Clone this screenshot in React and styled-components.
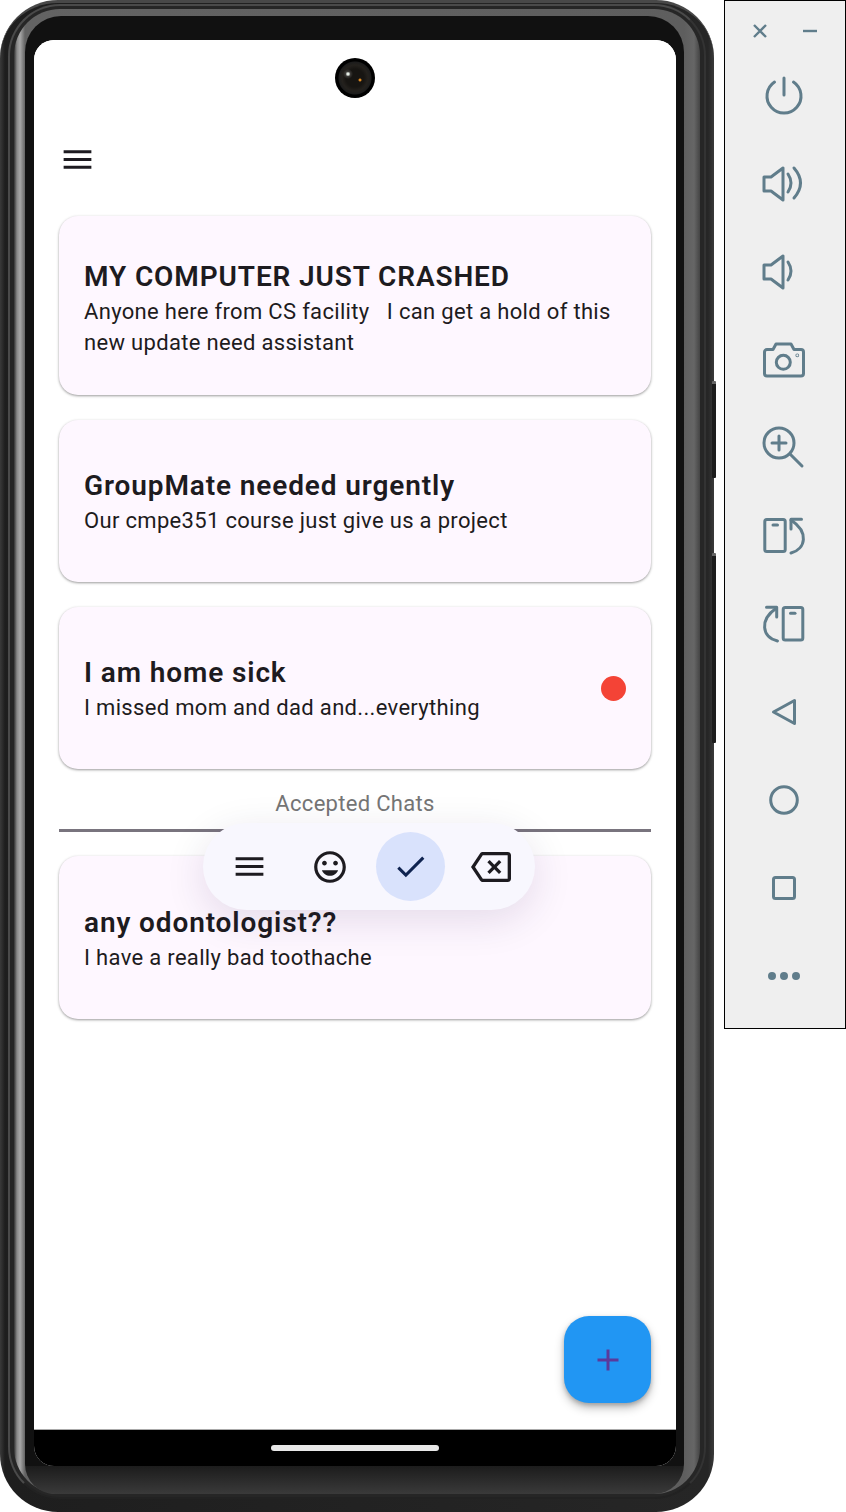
import React from 'react';
import styled, { createGlobalStyle } from 'styled-components';

const GlobalStyle = createGlobalStyle`
  html, body {
    margin: 0;
    padding: 0;
    background: #fff;
  }
  * {
    box-sizing: border-box;
  }
`;

const material = {
  menu: 'M3 18h18v-2H3v2zm0-5h18v-2H3v2zm0-7v2h18V6H3z',
  smile: 'M11.99 2C6.47 2 2 6.48 2 12s4.47 10 9.99 10C17.52 22 22 17.52 22 12S17.52 2 11.99 2zM12 20c-4.42 0-8-3.58-8-8s3.58-8 8-8 8 3.58 8 8-3.58 8-8 8zm3.5-9c.83 0 1.5-.67 1.5-1.5S16.33 8 15.5 8 14 8.67 14 9.5s.67 1.5 1.5 1.5zm-7 0c.83 0 1.5-.67 1.5-1.5S9.33 8 8.5 8 7 8.67 7 9.5 7.67 11 8.5 11zm3.5 6.5c2.33 0 4.31-1.46 5.11-3.5H6.89c.8 2.04 2.78 3.5 5.11 3.5z',
  check: 'M9 16.17L4.83 12l-1.42 1.41L9 19 21 7l-1.41-1.41z',
  backspace: 'M22 3H7c-.69 0-1.23.35-1.59.88L0 12l5.41 8.11c.36.53.9.89 1.59.89h15c1.1 0 2-.9 2-2V5c0-1.1-.9-2-2-2zm0 16H7.07L2.4 12l4.66-7H22v14zM11.2 16.2L14 13.4l2.8 2.8 1.4-1.4L15.4 12l2.8-2.8-1.4-1.4L14 10.6l-2.8-2.8-1.4 1.4L12.6 12l-2.8 2.8z',
  add: 'M19 13h-6v6h-2v-6H5v-2h6V5h2v6h6v2z',
};

const MaterialIcon = ({ name, size = 37, color = '#1d1b20' }) => (
  <svg width={size} height={size} viewBox="0 0 24 24" fill={color}>
    <path d={material[name]} />
  </svg>
);

const chats = [
  {
    title: 'MY COMPUTER JUST CRASHED',
    body: 'Anyone here from CS facility   I can get a hold of this new update need assistant',
    height: 179,
    offset: 4,
  },
  { title: 'GroupMate needed urgently', body: 'Our cmpe351 course just give us a project', height: 162 },
  { title: 'I am home sick', body: 'I missed mom and dad and...everything', height: 162, unread: true },
];

const accepted = [{ title: 'any odontologist??', body: 'I have a really bad toothache', height: 163 }];

const ChatCard = ({ chat }) => (
  <Card $height={chat.height} $offset={chat.offset || 0}>
    <CardText>
      <CardTitle>{chat.title}</CardTitle>
      <CardBody>{chat.body}</CardBody>
    </CardText>
    {chat.unread && <UnreadDot />}
  </Card>
);

const sideIcons = [
  <>
    <path d="M22 4V21" />
    <path d="M12.5 8A17 17 0 1 0 31.5 8" />
  </>,
  <>
    <path d="M2 15H9L21 6V38L9 29H2Z" />
    <path d="M26 12Q32 21 26 30" />
    <path d="M32 6Q45 21 32 36" />
  </>,
  <>
    <path d="M2 15H9L21 6V38L9 29H2Z" />
    <path d="M26 12Q32 21 26 30" />
  </>,
  <>
    <path d="M5 11.5H11L14 6H29L32 11.5H39A2.5 2.5 0 0 1 41.5 14V35.5A2.5 2.5 0 0 1 39 38H5A2.5 2.5 0 0 1 2.5 35.5V14A2.5 2.5 0 0 1 5 11.5Z" />
    <circle cx="21.3" cy="24.3" r="7" />
    <circle cx="35.3" cy="17.3" r="0.4" />
  </>,
  <>
    <circle cx="17" cy="17" r="15" />
    <path d="M28 28L40 40" />
    <path d="M10 17H24M17 10V24" />
  </>,
  <>
    <rect x="2.8" y="5.5" width="20.4" height="32" rx="2" />
    <path d="M11 11H15.5" />
    <path d="M29 6C47 18 44 35 29 39" />
    <path d="M29 5.3H39.5M29 5.3V15" />
  </>,
  <>
    <rect x="21.2" y="5.5" width="19.6" height="32.5" rx="2" />
    <path d="M28.5 11.3H33" />
    <path d="M14.5 6C-3 18 0 35 15.5 39" />
    <path d="M14.7 5.3H4.5M14.7 5.3V15" />
  </>,
  <path d="M11.5 22L32.5 10.5V33.5Z" />,
  <circle cx="22" cy="22" r="13.3" />,
  <rect x="11.5" y="11.5" width="21" height="21" rx="2" />,
  <>
    <circle cx="10" cy="22" r="2.5" />
    <circle cx="22" cy="22" r="2.5" />
    <circle cx="34" cy="22" r="2.5" />
  </>,
];

export default function App() {
  return (
    <Stage>
      <GlobalStyle />
      <Phone>
        <VolumeKey $top={378} $height={97} />
        <VolumeKey $top={550} $height={190} />
        <Groove>
          <Gloss>
            <Bezel>
              <Screen>
                <Camera />
                <AppArea>
                  <Header>
                    <MaterialIcon name="menu" />
                  </Header>
                  <CardList>
                    {chats.map((chat, index) => (
                      <ChatCard chat={chat} key={index} />
                    ))}
                  </CardList>
                  <SectionLabel>Accepted Chats</SectionLabel>
                  <Divider />
                  <CardList>
                    {accepted.map((chat, index) => (
                      <ChatCard chat={chat} key={index} />
                    ))}
                  </CardList>
                  <FloatingBar>
                    <BarButton>
                      <MaterialIcon name="menu" />
                    </BarButton>
                    <BarButton>
                      <MaterialIcon name="smile" size={38} />
                    </BarButton>
                    <BarButton $active>
                      <MaterialIcon name="check" color="#0f2350" />
                    </BarButton>
                    <BarButton>
                      <MaterialIcon name="backspace" size={40} />
                    </BarButton>
                  </FloatingBar>
                  <Fab>
                    <MaterialIcon name="add" size={36} color="#5a3a9c" />
                  </Fab>
                </AppArea>
                <NavBar>
                  <HomePill />
                </NavBar>
              </Screen>
            </Bezel>
          </Gloss>
        </Groove>
      </Phone>
      <SideBar>
        <SideHeader>
          <svg width="16" height="16" viewBox="0 0 16 16">
            <SideStroke d="M2 2L14 14M14 2L2 14" />
          </svg>
          <svg width="16" height="16" viewBox="0 0 16 16">
            <SideStroke d="M1 8H15" />
          </svg>
        </SideHeader>
        {sideIcons.map((icon, index) => (
          <SideItem key={index}>
            <SideIcon viewBox="0 0 44 44" $dots={index === sideIcons.length - 1}>
              {icon}
            </SideIcon>
          </SideItem>
        ))}
      </SideBar>
    </Stage>
  );
}

const Stage = styled.div`
  width: 846px;
  height: 1512px;
  display: flex;
  align-items: flex-start;
  gap: 10px;
  background: #fff;
  font-family: Roboto, "Liberation Sans", sans-serif;
`;

const Phone = styled.div`
  position: relative;
  width: 714px;
  height: 1512px;
  flex: none;
  padding: 1px 8px 13px 8px;
  border-radius: 58px;
  border-top: 3px solid #484848;
  background: linear-gradient(to right, #3a3a3a, #1e1e1e 5px, #262626 calc(100% - 6px), #3a3a3a);
`;

const VolumeKey = styled.div`
  position: absolute;
  right: -2px;
  top: ${(p) => p.$top}px;
  width: 4px;
  height: ${(p) => p.$height}px;
  background: #1d1d1d;
  border-top: 3px solid #666;
  border-radius: 1px;
`;

const Groove = styled.div`
  height: 100%;
  padding: 3px 4px 3px 4px;
  border: 2px solid #4a4a4a;
  border-right-color: #333;
  border-bottom-color: #222;
  border-radius: 52px;
  background: #262626;
`;

const Gloss = styled.div`
  height: 100%;
  padding: 7px 16px 0 11px;
  border-radius: 46px;
  background: linear-gradient(to right, #333, #8a8a8a 3px, #a8a8a8 6px, #636363 11px, #5e5e5e calc(100% - 16px), #666 calc(100% - 6px), #444);
`;

const Bezel = styled.div`
  height: 100%;
  padding: 24px 8px 28px 9px;
  border-radius: 36px 36px 30px 30px;
  background: linear-gradient(to bottom, #111 calc(100% - 28px), #1c1c1c calc(100% - 28px), #3a3a3a);
`;

const Screen = styled.div`
  position: relative;
  height: 100%;
  display: flex;
  flex-direction: column;
  overflow: hidden;
  border-radius: 20px;
  background: #fff;
`;

const Camera = styled.div`
  position: absolute;
  z-index: 1;
  left: 301px;
  top: 18px;
  width: 40px;
  height: 40px;
  border-radius: 50%;
  background:
    radial-gradient(circle at 13px 16px, #e8f0e8 0 1px, rgba(200, 200, 200, 0.2) 2.5px, transparent 5px),
    radial-gradient(circle at 25px 22px, #e08a20 0 0.8px, transparent 2px),
    radial-gradient(circle at 50% 50%, #171512 0 9px, #24211d 13px, #1c1c1c 16px, #000 17px);
`;

const AppArea = styled.div`
  position: relative;
  flex: 1;
  padding: 101px 25px 0;
  background: #fff;
`;

const Header = styled.div`
  display: flex;
  height: 75px;
`;

const CardList = styled.div`
  display: flex;
  flex-direction: column;
  gap: 25px;
`;

const Card = styled.div`
  min-height: ${(p) => p.$height}px;
  display: flex;
  align-items: center;
  justify-content: space-between;
  gap: 24px;
  padding: ${(p) => p.$offset}px 25px 0 25px;
  border-radius: 19px;
  background: #fef7ff;
  box-shadow: 0 1px 3px rgba(0, 0, 0, 0.3), 0 1px 2px rgba(0, 0, 0, 0.12);
`;

const CardText = styled.div`
  flex: 1;
  min-width: 0;
`;

const CardTitle = styled.div`
  font-size: 28px;
  line-height: 39px;
  font-weight: 600;
  letter-spacing: 0.88px;
  color: #1d1b20;
`;

const CardBody = styled.div`
  font-size: 22px;
  line-height: 31px;
  letter-spacing: 0.32px;
  white-space: pre-wrap;
  color: #1d1b20;
`;

const UnreadDot = styled.div`
  width: 25px;
  height: 25px;
  flex: none;
  border-radius: 50%;
  background: #f44336;
`;

const SectionLabel = styled.div`
  margin-top: 22px;
  font-size: 22px;
  line-height: 26px;
  letter-spacing: 0.3px;
  text-align: center;
  color: #757575;
`;

const Divider = styled.div`
  height: 3px;
  margin: 12px 0 24px;
  background: #79747e;
`;

const FloatingBar = styled.div`
  position: absolute;
  left: 169px;
  top: 783px;
  width: 332px;
  height: 87px;
  display: flex;
  align-items: center;
  gap: 11.5px;
  padding: 0 9px 0 12px;
  border-radius: 44px;
  background: #f8f7fe;
  box-shadow: 0 10px 40px rgba(40, 20, 70, 0.12);
`;

const BarButton = styled.div`
  width: 69px;
  height: 69px;
  flex: none;
  display: flex;
  align-items: center;
  justify-content: center;
  border-radius: 50%;
  background: ${(p) => (p.$active ? '#d9e2fc' : 'transparent')};
`;

const Fab = styled.div`
  position: absolute;
  right: 25px;
  bottom: 26px;
  width: 87px;
  height: 87px;
  display: flex;
  align-items: center;
  justify-content: center;
  border-radius: 25px;
  background: #2196f3;
  box-shadow: 0 5px 10px rgba(0, 0, 0, 0.25), 0 2px 4px rgba(0, 0, 0, 0.2);
`;

const NavBar = styled.div`
  height: 37px;
  flex: none;
  display: flex;
  justify-content: center;
  padding-top: 15px;
  border-top: 1px solid #aaa;
  background: #000;
`;

const HomePill = styled.div`
  width: 168px;
  height: 6px;
  border-radius: 3px;
  background: #e8e8e8;
`;

const SideBar = styled.div`
  width: 122px;
  height: 1029px;
  flex: none;
  display: flex;
  flex-direction: column;
  border: 1px solid #000;
  background: #efefef;
`;

const SideHeader = styled.div`
  height: 51px;
  flex: none;
  display: flex;
  align-items: center;
  gap: 34px;
  padding: 8px 0 0 27px;
`;

const SideStroke = styled.path`
  fill: none;
  stroke: #607d8b;
  stroke-width: 2.4;
`;

const SideItem = styled.div`
  height: 88px;
  flex: none;
  display: flex;
  align-items: center;
  justify-content: center;
  padding-right: 2px;
`;

const SideIcon = styled.svg`
  width: 44px;
  height: 44px;
  overflow: visible;
  fill: ${(p) => (p.$dots ? '#607d8b' : 'none')};
  stroke: #607d8b;
  stroke-width: 3;
  stroke-linejoin: round;
  stroke-linecap: round;
`;
